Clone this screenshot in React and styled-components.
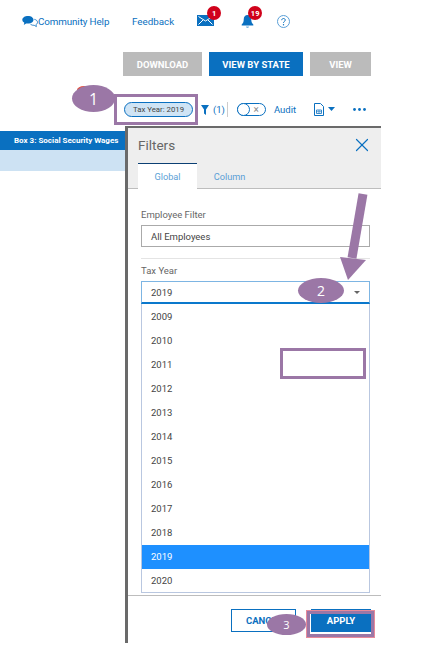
import React from "react";
import styled, { createGlobalStyle } from "styled-components";
import { X } from "lucide-react";

const Global = createGlobalStyle`
  html, body {
    margin: 0;
    padding: 0;
    background: #fff;
    font-family: Roboto, "Liberation Sans", sans-serif;
  }
`;

const Page = styled.div`
  position: relative;
  width: 448px;
  height: 645px;
  overflow: hidden;
  display: flex;
  flex-direction: column;
`;

const Nav = styled.div`
  height: 42px;
  display: flex;
  align-items: center;
  padding: 0 0 0 22px;
  font-size: 9.8px;
  color: #0a70c0;
`;

const HelpLink = styled.span`
  display: flex;
  align-items: center;
  width: 110px;
  letter-spacing: -0.1px;
`;

const IconSlot = styled.span`
  position: relative;
  display: block;
  width: ${(p) => p.$w}px;
  height: 16px;
  margin-left: ${(p) => p.$ml}px;
`;

const Badge = styled.span`
  position: absolute;
  top: -7px;
  left: ${(p) => p.$left}px;
  width: 14px;
  height: 14px;
  border-radius: 50%;
  background: #d0021b;
  color: #fff;
  font-size: 7.5px;
  font-weight: 700;
  display: flex;
  align-items: center;
  justify-content: center;
`;

const Actions = styled.div`
  margin-top: 10px;
  height: 24px;
  display: flex;
  gap: 7px;
  padding-left: 123px;
`;

const ActionBtn = styled.button`
  width: ${(p) => p.$w}px;
  height: 24px;
  margin: 0;
  padding: 0;
  border: 0;
  background: ${(p) => (p.$active ? "#0a70c0" : "#bbbbbb")};
  color: #fff;
  font-family: inherit;
  font-size: 9.5px;
  font-weight: 700;
`;

const Toolbar = styled.div`
  height: 50px;
  box-sizing: border-box;
  display: flex;
  align-items: flex-start;
  padding: 26px 0 0 124px;
  font-size: 9.5px;
  color: #0a70c0;
`;

const Chip = styled.span`
  width: 69px;
  height: 15px;
  box-sizing: border-box;
  border: 1px solid #0a70c0;
  border-radius: 8px;
  background: #cfe4f5;
  color: #444;
  font-size: 7.8px;
  display: flex;
  align-items: center;
  justify-content: center;
`;

const Count = styled.span`
  margin-left: 4px;
  padding-right: 2px;
  height: 15px;
  line-height: 15px;
  border-right: 1px solid #ccc;
`;

const Toggle = styled.span`
  position: relative;
  width: 29px;
  height: 13px;
  box-sizing: border-box;
  margin: 1px 0 0 9px;
  border: 1px solid #0a70c0;
  border-radius: 7px;
  color: #888;
  font-size: 10px;
  line-height: 11px;
  text-align: right;
  padding-right: 6px;
  &::before {
    content: "";
    position: absolute;
    left: -1px;
    top: -1px;
    width: 11px;
    height: 11px;
    border: 1px solid #0a70c0;
    border-radius: 50%;
    background: #fff;
  }
`;

const Audit = styled.span`
  margin-left: 8px;
  width: 40px;
  height: 15px;
  line-height: 15px;
`;

const Content = styled.div`
  flex: 1;
  display: flex;
  min-height: 0;
`;

const Sidebar = styled.div`
  width: 125px;
  padding-top: 5px;
`;

const SideActive = styled.div`
  height: 19px;
  line-height: 19px;
  padding-left: 14px;
  background: #0a70c0;
  color: #fff;
  font-size: 8px;
  font-weight: 700;
  white-space: nowrap;
`;

const SideRow = styled.div`
  height: 21px;
  background: #cde2f3;
`;

const Panel = styled.div`
  width: 256px;
  height: 517px;
  box-sizing: border-box;
  border-top: 2px solid #6a6a6a;
  border-left: 3px solid #6a6a6a;
  display: flex;
  flex-direction: column;
`;

const PanelHead = styled.div`
  height: 61px;
  box-sizing: border-box;
  background: #eeeeee;
  border-bottom: 1px solid #bdbdbd;
  display: flex;
  flex-direction: column;
  justify-content: space-between;
`;

const TitleRow = styled.div`
  display: flex;
  justify-content: space-between;
  align-items: center;
  height: 34px;
  padding: 0 8px 0 10px;
  color: #666;
  font-size: 13.5px;
`;

const Tabs = styled.div`
  display: flex;
  padding-left: 10px;
  font-size: 9.2px;
`;

const Tab = styled.div`
  width: ${(p) => p.$w}px;
  height: 26px;
  box-sizing: border-box;
  margin-bottom: -1px;
  border-top: 1px solid ${(p) => (p.$active ? "#0b3f73" : "transparent")};
  background: ${(p) => (p.$active ? "#fff" : "transparent")};
  color: #5b9fd6;
  display: flex;
  align-items: center;
  justify-content: center;
`;

const Body = styled.div`
  flex: 1;
  padding: 19px 11px 0 13px;
`;

const Label = styled.div`
  height: 14px;
  line-height: 14px;
  color: #666;
  font-size: 9.5px;
`;

const Select = styled.div`
  height: ${(p) => (p.$open ? 23 : 22)}px;
  box-sizing: border-box;
  margin-top: 3px;
  padding-left: 9px;
  border: 1px solid ${(p) => (p.$open ? "#7db5e3" : "#aaaaaa")};
  border-bottom: ${(p) => (p.$open ? "2px solid #0a78cc" : "1px solid #aaaaaa")};
  color: #444;
  font-size: 9.5px;
  display: flex;
  align-items: center;
  justify-content: space-between;
`;

const Caret = styled.span`
  width: 0;
  height: 0;
  margin-right: 9px;
  border-left: 3.5px solid transparent;
  border-right: 3.5px solid transparent;
  border-top: 3.5px solid #666;
`;

const Divider = styled.div`
  height: 1px;
  margin: 11px 0 5px;
  background: #e4e4e4;
`;

const List = styled.div`
  height: 289px;
  box-sizing: border-box;
  border: 1px solid #b9c7e0;
  border-top: 0;
  padding-top: 1px;
`;

const Option = styled.div`
  height: 24px;
  line-height: 24px;
  padding-left: 9px;
  font-size: 9.5px;
  color: ${(p) => (p.$selected ? "#fff" : "#444")};
  background: ${(p) => (p.$selected ? "#1e90ff" : "transparent")};
`;

const Footer = styled.div`
  height: 46px;
  box-sizing: border-box;
  border-top: 1px solid #bdbdbd;
  display: flex;
  justify-content: flex-end;
  align-items: flex-start;
  gap: 15px;
  padding: 13px 10px 0 0;
  margin-bottom: 2px;
`;

const Cancel = styled.button`
  width: 65px;
  height: 23px;
  padding: 0 0 0 14px;
  border: 1px solid #0a70c0;
  background: #fff;
  color: #0a70c0;
  font-family: inherit;
  font-size: 9.5px;
  font-weight: 700;
  text-align: left;
`;

const Apply = styled.button`
  width: 60px;
  height: 23px;
  padding: 0;
  border: 0;
  background: #0a70c0;
  color: #fff;
  font-family: inherit;
  font-size: 9.5px;
  font-weight: 700;
`;

/* annotations drawn over the screenshot */
const Bubble = styled.div`
  position: absolute;
  left: ${(p) => p.$x}px;
  top: ${(p) => p.$y}px;
  width: ${(p) => p.$w}px;
  height: ${(p) => p.$h}px;
  border-radius: 50%;
  background: #9b77a6;
  color: #fff;
  font-family: "Open Sans", sans-serif;
  font-size: ${(p) => p.$size}px;
  display: flex;
  align-items: center;
  justify-content: center;
`;

const RedPeek = styled.div`
  position: absolute;
  left: 77px;
  top: 86px;
  width: 14px;
  height: 8px;
  border-radius: 50%;
  background: #e8503a;
`;

const Frame = styled.div`
  position: absolute;
  left: ${(p) => p.$x}px;
  top: ${(p) => p.$y}px;
  width: ${(p) => p.$w}px;
  height: ${(p) => p.$h}px;
  box-sizing: border-box;
  border: 3px solid #9b77a6;
  background: ${(p) => (p.$fill ? "#fff" : "transparent")};
  box-shadow: ${(p) => (p.$pink ? "0 0 0 1px #e88a9a" : "none")};
`;

const Arrow = styled.svg`
  position: absolute;
  left: 335px;
  top: 190px;
`;

const years = [2009, 2010, 2011, 2012, 2013, 2014, 2015, 2016, 2017, 2018, 2019, 2020];

const ChatIcon = () => (
  <svg width="16" height="13" viewBox="0 0 16 13" style={{ flexShrink: 0 }}>
    <path d="M6 1c3 0 5.500 1.600 5.500 3.800S9 8.600 6 8.600c-.7 0-1.300-.1-1.900-.2L1.800 10l.5-2.300C1 7 .3 6 .3 4.800.3 2.600 3 1 6 1z" fill="#0a70c0" />
    <path d="M12.300 4.300c1.900.4 3.200 1.500 3.200 3 0 1-.6 1.800-1.500 2.300l.4 2-2.200-1.300c-1.400.1-2.800-.2-3.700-1" fill="none" stroke="#0a70c0" strokeWidth=".8" />
  </svg>
);

const MailIcon = () => (
  <svg width="17" height="11" viewBox="0 0 17 11" style={{ display: "block", marginTop: 2 }}>
    <rect width="17" height="11" fill="#0a70c0" />
    <path d="M1.500 1.500 8.500 6l7-4.500M1.500 9.500l4.500-4.500M15.500 9.500 11 5" stroke="#fff" strokeWidth="1" fill="none" />
  </svg>
);

const BellIcon = () => (
  <svg width="13" height="15" viewBox="0 0 13 16" style={{ display: "block", marginTop: 1 }}>
    <path d="M6.500 1C9 1 10.500 3 10.500 5.500c0 3 .8 4.300 2.200 5.700v1H.3v-1C1.700 9.800 2.500 8.500 2.500 5.500 2.500 3 4 1 6.500 1z" fill="#0a70c0" />
    <path d="M4.800 13.300h3.400c-.2 1-.9 1.600-1.700 1.600s-1.500-.6-1.700-1.600z" fill="#7fb5e0" />
  </svg>
);

const HelpIcon = () => (
  <svg width="13" height="13" viewBox="0 0 13 13" style={{ display: "block", marginTop: 2 }}>
    <circle cx="6.500" cy="6.500" r="6" fill="none" stroke="#5b9fd6" strokeWidth="1" />
    <path d="M4.700 5.200c0-1 .8-1.700 1.800-1.700s1.800.7 1.800 1.600c0 1.300-1.800 1.300-1.800 2.700" fill="none" stroke="#0a70c0" strokeWidth="1" />
    <circle cx="6.500" cy="9.700" r=".7" fill="#0a70c0" />
  </svg>
);

const FilterIcon = () => (
  <svg width="8" height="10" viewBox="0 0 8 10" style={{ display: "block", margin: "3px 0 0 8px" }}>
    <path d="M0 0h8L5 4.500V10L3 8.500v-4z" fill="#0a70c0" />
  </svg>
);

const DocIcon = () => (
  <svg width="10" height="13" viewBox="0 0 10 13" style={{ display: "block", margin: "1px 0 0" }}>
    <path d="M.5.500h6l3 3v9h-9z" fill="#fff" stroke="#0a70c0" />
    <path d="M2.500 7h5v3.500h-5z" fill="none" stroke="#0a70c0" strokeWidth=".8" />
    <path d="M5 7v3.500M2.500 8.700h5" stroke="#0a70c0" strokeWidth=".6" />
  </svg>
);

const DocCaret = () => (
  <svg width="7" height="4" viewBox="0 0 7 4" style={{ display: "block", margin: "5px 0 0 4px" }}>
    <path d="M0 0h7L3.500 4z" fill="#0a70c0" />
  </svg>
);

const Dots = () => (
  <svg width="13" height="3" viewBox="0 0 13 3" style={{ display: "block", margin: "6px 0 0 18px" }}>
    <circle cx="1.500" cy="1.500" r="1.400" fill="#0a70c0" />
    <circle cx="6.500" cy="1.500" r="1.400" fill="#0a70c0" />
    <circle cx="11.500" cy="1.500" r="1.400" fill="#0a70c0" />
  </svg>
);

export default function App() {
  return (
    <Page>
      <Global />
      <Nav>
        <HelpLink>
          <ChatIcon />
          Community Help
        </HelpLink>
        <span>Feedback</span>
        <IconSlot $w={17} $ml={23}>
          <MailIcon />
          <Badge $left={10}>1</Badge>
        </IconSlot>
        <IconSlot $w={13} $ml={27}>
          <BellIcon />
          <Badge $left={7}>19</Badge>
        </IconSlot>
        <IconSlot $w={13} $ml={23}>
          <HelpIcon />
        </IconSlot>
      </Nav>
      <Actions>
        <ActionBtn $w={79}>DOWNLOAD</ActionBtn>
        <ActionBtn $w={94} $active>VIEW BY STATE</ActionBtn>
        <ActionBtn $w={61}>VIEW</ActionBtn>
      </Actions>
      <Toolbar>
        <Chip>Tax Year: 2019</Chip>
        <FilterIcon />
        <Count>(1)</Count>
        <Toggle>×</Toggle>
        <Audit>Audit</Audit>
        <DocIcon />
        <DocCaret />
        <Dots />
      </Toolbar>
      <Content>
        <Sidebar>
          <SideActive>Box 3: Social Security Wages</SideActive>
          <SideRow />
        </Sidebar>
        <Panel>
          <PanelHead>
            <TitleRow>
              Filters
              <X size={22} color="#0a70c0" strokeWidth={1.3} />
            </TitleRow>
            <Tabs>
              <Tab $w={59} $active>Global</Tab>
              <Tab $w={65}>Column</Tab>
            </Tabs>
          </PanelHead>
          <Body>
            <Label>Employee Filter</Label>
            <Select>
              All Employees
            </Select>
            <Divider />
            <Label>Tax Year</Label>
            <Select $open>
              2019
              <Caret />
            </Select>
            <List>
              {years.map((y) => (
                <Option key={y} $selected={y === 2019}>{y}</Option>
              ))}
            </List>
          </Body>
          <Footer>
            <Cancel>CANCEL</Cancel>
            <Apply>APPLY</Apply>
          </Footer>
        </Panel>
      </Content>

      <Frame $x={114} $y={94} $w={84} $h={31} />
      <RedPeek />
      <Bubble $x={72} $y={85} $w={43} $h={27} $size={16}>1</Bubble>
      <Arrow width="40" height="95" viewBox="0 0 40 95">
        <path d="M28 4 17 68" stroke="#9b77a6" strokeWidth="9" fill="none" />
        <path d="M5 67 31 70 13 90z" fill="#9b77a6" />
      </Arrow>
      <Bubble $x={298} $y={278} $w={46} $h={25} $size={14}>2</Bubble>
      <Frame $x={280} $y={348} $w={86} $h={31} $fill />
      <Bubble $x={267} $y={614} $w={39} $h={21} $size={11}>3</Bubble>
      <Frame $x={307} $y={611} $w={67} $h={26} $pink />
    </Page>
  );
}
